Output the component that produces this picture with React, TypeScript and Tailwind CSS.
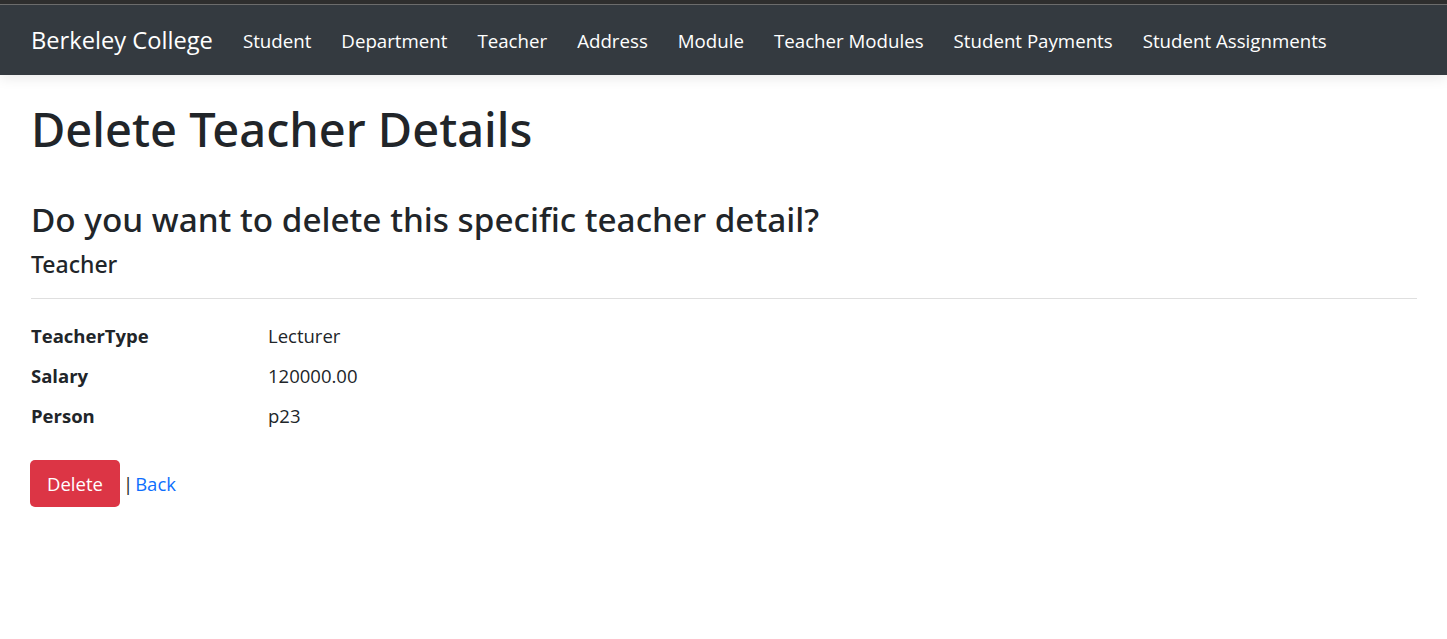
import React from "react";

const links = [
  "Student",
  "Department",
  "Teacher",
  "Address",
  "Module",
  "Teacher Modules",
  "Student Payments",
  "Student Assignments",
];

const rows = [
  { label: "TeacherType", value: "Lecturer" },
  { label: "Salary", value: "120000.00" },
  { label: "Person", value: "p23" },
];

export default function App() {
  return (
    <div className="min-h-screen bg-white text-[#212529] font-['Open_Sans',sans-serif]">
      <div className="h-[4px] bg-[#2f2f2f]" />
      <div className="h-px bg-[#6e6e6e]" />
      <nav className="flex h-[70px] items-center bg-[#343a40] px-[31px] pt-[2px] shadow-[0_4px_12px_rgba(0,0,0,0.08)]">
        <span className="mr-[30px] text-[23.7px] text-white">Berkeley College</span>
        <div className="flex gap-[30px]">
          {links.map((l) => (
            <a key={l} href="#" className="text-[18.7px] text-white">
              {l}
            </a>
          ))}
        </div>
      </nav>

      <main className="px-[31px] pr-[30px] font-['Noto_Sans',sans-serif]">
        <h1 className="mt-[24px] text-[47px] leading-[60px] font-medium">Delete Teacher Details</h1>
        <h2 className="mt-[39px] text-[33.3px] leading-[42px] font-medium">
          Do you want to delete this specific teacher detail?
        </h2>
        <h4 className="mt-[10px] text-[23px] leading-[29px] font-medium">Teacher</h4>
        <hr className="mt-[19px] border-t border-[#dfdfdf]" />
        <dl className="mt-[17px] font-['Open_Sans',sans-serif]">
          {rows.map((r) => (
            <div key={r.label} className="flex h-[40px] items-center text-[18.5px]">
              <dt className="w-[237px] font-bold">{r.label}</dt>
              <dd>{r.value}</dd>
            </div>
          ))}
        </dl>
        <div className="mt-[24px] flex items-center font-['Open_Sans',sans-serif]">
          <button className="-ml-px h-[47px] w-[90px] rounded-[5px] bg-[#dc3545] text-[18.5px] text-white">
            Delete
          </button>
          <span className="ml-[3px] text-[18.5px]">|</span>
          <a href="#" className="ml-[2px] text-[18.5px] text-[#0d6efd]">
            Back
          </a>
        </div>
      </main>
    </div>
  );
}
